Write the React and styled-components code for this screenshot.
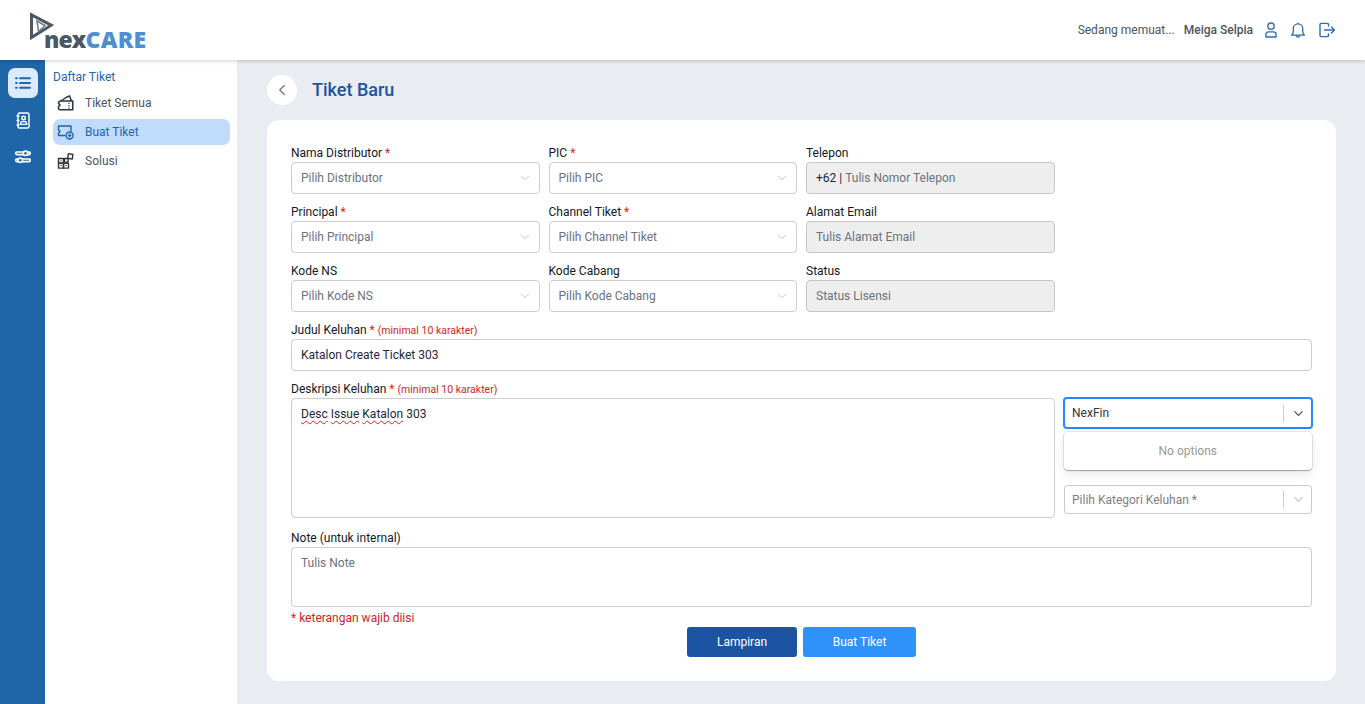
import React from "react";
import styled, { createGlobalStyle } from "styled-components";
import { ChevronDown, ChevronLeft } from "lucide-react";

const GlobalStyle = createGlobalStyle`
  html, body {
    margin: 0;
    padding: 0;
    height: 100%;
    overflow: hidden;
  }
  body {
    font-family: Roboto, "Liberation Sans", sans-serif;
    font-size: 12px;
    color: #1f2937;
    background: #e9ecf1;
  }
  * {
    box-sizing: border-box;
  }
`;

const LogoMark = () => (
  <svg width="25" height="29" viewBox="0 0 25 29" fill="none">
    <path d="M1.500 2.800 L21.200 13.200 L1.500 25.500 Z" stroke="#4b5763" strokeWidth="3" />
    <path d="M7 9 L15 13.500 L8.500 19.500 Z" stroke="#6f7a85" strokeWidth="1.500" />
  </svg>
);

const IconList = () => (
  <svg width="16" height="16" viewBox="0 0 16 16" fill="none" stroke="#1f66a9" strokeWidth="1.900" strokeLinecap="round">
    <path d="M5 3.200h10M5 8h10M5 12.800h10M1 3.200h.8M1 8h.8M1 12.800h.8" />
  </svg>
);

const IconContacts = () => (
  <svg width="16" height="17" viewBox="0 0 16 17" fill="none" stroke="#fff" strokeWidth="1.400" strokeLinejoin="round">
    <rect x="3" y="1" width="11" height="15" rx="1.500" />
    <path d="M1.500 4h3M1.500 8.500h3M1.500 13h3" />
    <circle cx="8.600" cy="6" r="1.800" />
    <path d="M5.600 12.400v-1.200c0-1 .7-1.600 1.600-1.600h2.800c.9 0 1.600.6 1.600 1.600v1.200z" />
  </svg>
);

const IconSliders = () => (
  <svg width="16" height="14" viewBox="0 0 16 14" fill="none" stroke="#fff" strokeWidth="1.600">
    <rect x="0.700" y="2" width="14.600" height="2.600" rx="1.300" />
    <rect x="0.700" y="9" width="14.600" height="2.600" rx="1.300" />
    <circle cx="10.500" cy="3.300" r="2.200" fill="#1f66a9" />
    <circle cx="5.300" cy="10.300" r="2.200" fill="#1f66a9" />
  </svg>
);

const IconTicketAll = () => (
  <svg width="17" height="16" viewBox="0 0 17 16" fill="none" stroke="#2b3440" strokeWidth="1.500" strokeLinejoin="round">
    <path d="M4 6 L9 2.500 L12.500 .8 L14.500 6" />
    <path d="M3.500 6 H15.800 V14.800 H3 C2 14.800 1.500 14.300 1.500 13.300 V11.200 C2.600 11.200 3 10.500 3 10 S2.600 8.800 1.500 8.800 C1.500 7 2.300 6 3.500 6 Z" />
    <path d="M12 7.800v1M12 10.200v1M12 12.600v1" />
  </svg>
);

const IconTicketNew = ({ color }) => (
  <svg width="17" height="16" viewBox="0 0 17 16" fill="none" stroke={color} strokeWidth="1.400" strokeLinejoin="round">
    <path d="M8.500 11.500H1.500V9c.9 0 1.400-.7 1.400-1.400S2.400 6.200 1.500 6.200V2h12.500v5.500" />
    <circle cx="12.600" cy="11.500" r="3.500" />
    <path d="M12.600 9.800v3.400M10.900 11.500h3.400" />
  </svg>
);

const IconBlocks = () => (
  <svg width="17" height="16" viewBox="0 0 17 16" fill="none" stroke="#2b3440" strokeWidth="1.400" strokeLinejoin="round">
    <rect x="1.500" y="5.500" width="5" height="4.800" />
    <rect x="1.500" y="10.300" width="5" height="4.800" />
    <rect x="6.500" y="10.300" width="5" height="4.800" />
    <rect x="7.500" y="5.500" width="3.600" height="3.600" />
    <rect x="11" y="1" width="4.600" height="4.600" transform="rotate(8 13 3.500)" />
    <path d="M4 7.500v1M4 12v1M9 12v1" />
  </svg>
);

const IconUser = () => (
  <svg width="12" height="16" viewBox="0 0 12 16" fill="none" stroke="#2f6db0" strokeWidth="1.300">
    <circle cx="6" cy="4.200" r="3.200" />
    <path d="M.9 15v-2.400c0-1.600 1.200-2.800 2.800-2.800h4.600c1.600 0 2.800 1.200 2.800 2.800V15z" strokeLinejoin="round" />
  </svg>
);

const IconBell = () => (
  <svg width="16" height="17" viewBox="0 0 16 17" fill="none" stroke="#2f6db0" strokeWidth="1.300" strokeLinejoin="round">
    <path d="M1.500 13.200c1.300-1 1.800-2.200 1.800-4V6.500a4.700 4.700 0 0 1 9.400 0v2.700c0 1.800.5 3 1.800 4z" />
    <path d="M6.300 13.400c0 2.400 3.400 2.400 3.400 0M8 1.800V.7" />
  </svg>
);

const IconLogout = () => (
  <svg width="16" height="16" viewBox="0 0 16 16" fill="none" stroke="#2f6db0" strokeWidth="1.400" strokeLinecap="round" strokeLinejoin="round">
    <path d="M9.500 4V2.400c0-.6-.4-1-1-1H2c-.6 0-1 .4-1 1v11.200c0 .6.4 1 1 1h6.500c.6 0 1-.4 1-1V12" />
    <path d="M5.500 8h10M12.500 5l3 3-3 3" />
  </svg>
);

const Select = ({ placeholder }) => (
  <SelectBox>
    <SelectValue>{placeholder}</SelectValue>
    <ChevronDown size={14} color="#b8bcc2" strokeWidth={1.5} />
  </SelectBox>
);

const Required = () => <Star> *</Star>;

export default function App() {
  return (
    <Page>
      <GlobalStyle />
      <Header>
        <Logo>
          <LogoMark />
          <LogoText>
            nex<LogoAccent>CARE</LogoAccent>
          </LogoText>
        </Logo>
        <HeaderRight>
          <LoadingText>Sedang memuat...</LoadingText>
          <UserName>Meiga Selpia</UserName>
          <HeaderIcons>
            <IconUser />
            <IconBell />
            <IconLogout />
          </HeaderIcons>
        </HeaderRight>
      </Header>
      <Body>
        <Rail>
          <RailButton $active>
            <IconList />
          </RailButton>
          <RailButton>
            <IconContacts />
          </RailButton>
          <RailButton>
            <IconSliders />
          </RailButton>
        </Rail>
        <Sidebar>
          <SidebarTitle>Daftar Tiket</SidebarTitle>
          <SideItem>
            <IconTicketAll />
            Tiket Semua
          </SideItem>
          <SideItem $active>
            <IconTicketNew color="#1f66a9" />
            Buat Tiket
          </SideItem>
          <SideItem>
            <IconBlocks />
            Solusi
          </SideItem>
        </Sidebar>
        <Main>
          <TitleRow>
            <BackButton>
              <ChevronLeft size={18} color="#6b7280" strokeWidth={1.6} />
            </BackButton>
            <PageTitle>Tiket Baru</PageTitle>
          </TitleRow>
          <Card>
            <FormGrid>
              <Field>
                <Label>Nama Distributor<Required /></Label>
                <Select placeholder="Pilih Distributor" />
              </Field>
              <Field>
                <Label>PIC<Required /></Label>
                <Select placeholder="Pilih PIC" />
              </Field>
              <Field>
                <Label>Telepon</Label>
                <ReadOnlyBox>
                  <Prefix>+62 |&nbsp;</Prefix>Tulis Nomor Telepon
                </ReadOnlyBox>
              </Field>
              <EmptyCell />

              <Field>
                <Label>Principal<Required /></Label>
                <Select placeholder="Pilih Principal" />
              </Field>
              <Field>
                <Label>Channel Tiket<Required /></Label>
                <Select placeholder="Pilih Channel Tiket" />
              </Field>
              <Field>
                <Label>Alamat Email</Label>
                <ReadOnlyBox>Tulis Alamat Email</ReadOnlyBox>
              </Field>
              <EmptyCell />

              <Field>
                <Label>Kode NS</Label>
                <Select placeholder="Pilih Kode NS" />
              </Field>
              <Field>
                <Label>Kode Cabang</Label>
                <Select placeholder="Pilih Kode Cabang" />
              </Field>
              <Field>
                <Label>Status</Label>
                <ReadOnlyBox>Status Lisensi</ReadOnlyBox>
              </Field>
              <EmptyCell />

              <Field $span={4}>
                <Label>
                  Judul Keluhan<Required /> <Hint>(minimal 10 karakter)</Hint>
                </Label>
                <TextBox>Katalon Create Ticket 303</TextBox>
              </Field>

              <Field $span={3}>
                <Label>
                  Deskripsi Keluhan<Required /> <Hint>(minimal 10 karakter)</Hint>
                </Label>
                <AreaBox $height={120}>
                  <Misspelled>Desc</Misspelled> <Misspelled>Issue</Misspelled>{" "}
                  <Misspelled>Katalon</Misspelled> 303
                </AreaBox>
              </Field>
              <SideSelects>
                <ComboWrap>
                  <Combo $focused>
                    <ComboValue>NexFin</ComboValue>
                    <ComboDivider />
                    <ChevronDown size={15} color="#4b5563" strokeWidth={2} />
                  </Combo>
                  <ComboMenu>No options</ComboMenu>
                </ComboWrap>
                <Combo>
                  <ComboPlaceholder>Pilih Kategori Keluhan *</ComboPlaceholder>
                  <ComboDivider />
                  <ChevronDown size={15} color="#c4c7cc" strokeWidth={2} />
                </Combo>
              </SideSelects>

              <NoteField $span={4}>
                <Label>Note (untuk internal)</Label>
                <AreaBox $height={60} $muted>Tulis Note</AreaBox>
              </NoteField>
            </FormGrid>
            <RequiredNote>* keterangan wajib diisi</RequiredNote>
            <Actions>
              <ActionButton $bg="#1c54a3" $width={110}>Lampiran</ActionButton>
              <ActionButton $bg="#2f92fb" $width={113}>Buat Tiket</ActionButton>
            </Actions>
          </Card>
        </Main>
      </Body>
    </Page>
  );
}

const Page = styled.div`
  display: flex;
  flex-direction: column;
  height: 704px;
  width: 1365px;
  overflow: hidden;
`;
const Header = styled.header`
  position: relative;
  z-index: 2;
  height: 60px;
  flex-shrink: 0;
  background: #fff;
  display: flex;
  align-items: center;
  justify-content: space-between;
  padding: 0 30px 0 30px;
  box-shadow: 0 1px 4px rgba(0, 0, 0, 0.2);
`;
const Logo = styled.div`
  display: flex;
  align-items: flex-start;
  height: 60px;
  padding-top: 12px;
`;
const LogoText = styled.div`
  font-family: "Open Sans", sans-serif;
  font-weight: 800;
  font-size: 23px;
  line-height: 24px;
  letter-spacing: -0.9px;
  color: #4b5763;
  margin: 15px 0 0 -11px;
`;
const LogoAccent = styled.span`
  color: #4f8fd0;
  letter-spacing: 0.3px;
`;
const HeaderRight = styled.div`
  display: flex;
  align-items: center;
`;
const LoadingText = styled.span`
  color: #4b5563;
  margin-right: 9px;
`;
const UserName = styled.span`
  color: #4b5563;
  font-weight: 500;
  margin-right: 12px;
`;
const HeaderIcons = styled.div`
  display: flex;
  align-items: center;
  gap: 13px;
`;
const Body = styled.div`
  flex: 1;
  display: flex;
  min-height: 0;
`;
const Rail = styled.nav`
  width: 45px;
  flex-shrink: 0;
  background: #1f66a9;
  display: flex;
  flex-direction: column;
  align-items: center;
  padding-top: 8px;
  gap: 7px;
`;
const RailButton = styled.div`
  width: 30px;
  height: 30px;
  border-radius: 7px;
  display: flex;
  align-items: center;
  justify-content: center;
  background: ${(p) => (p.$active ? "#dbeafe" : "transparent")};
`;
const Sidebar = styled.aside`
  width: 192px;
  flex-shrink: 0;
  background: #fff;
  padding: 10px 7px 0 8px;
  display: flex;
  flex-direction: column;
  gap: 3px;
`;
const SidebarTitle = styled.div`
  color: #1f66a9;
  line-height: 15px;
  height: 17px;
`;
const SideItem = styled.div`
  height: 26px;
  display: flex;
  align-items: center;
  gap: 11px;
  padding-left: 4px;
  border-radius: 7px;
  color: ${(p) => (p.$active ? "#1f66a9" : "#4b5563")};
  background: ${(p) => (p.$active ? "#c0dbfc" : "transparent")};
`;
const Main = styled.main`
  flex: 1;
  min-width: 0;
  padding: 15px 29px 0 30px;
`;
const TitleRow = styled.div`
  display: flex;
  align-items: center;
  gap: 15px;
  height: 30px;
  margin-bottom: 15px;
`;
const BackButton = styled.div`
  width: 30px;
  height: 30px;
  border-radius: 50%;
  background: #fff;
  display: flex;
  align-items: center;
  justify-content: center;
`;
const PageTitle = styled.h1`
  margin: 0 0 2px;
  font-size: 18px;
  font-weight: 500;
  color: #1c54a3;
`;
const Card = styled.section`
  height: 561px;
  background: #fff;
  border-radius: 12px;
  padding: 24px 24px 0 24px;
`;
const FormGrid = styled.div`
  display: grid;
  grid-template-columns: repeat(4, 1fr);
  column-gap: 9px;
  row-gap: 9px;
`;
const Field = styled.div`
  grid-column: span ${(p) => p.$span || 1};
  min-width: 0;
`;
const NoteField = styled(Field)`
  margin-top: 2px;
`;
const EmptyCell = styled.div``;
const Label = styled.div`
  height: 18px;
  line-height: 19px;
  color: #111827;
  white-space: nowrap;
`;
const Star = styled.span`
  color: #dc2626;
`;
const Hint = styled.span`
  color: #cc1f1f;
  font-size: 10.5px;
`;
const SelectBox = styled.div`
  height: 32px;
  border: 1px solid #cbcdd1;
  border-radius: 4px;
  background: #fff;
  display: flex;
  align-items: center;
  justify-content: space-between;
  padding: 0 7px 0 9px;
`;
const SelectValue = styled.span`
  color: #6b7280;
`;
const ReadOnlyBox = styled.div`
  height: 32px;
  border: 1px solid #c4c6ca;
  border-radius: 4px;
  background: #eeeeee;
  display: flex;
  align-items: center;
  padding: 0 9px;
  color: #6b7280;
`;
const Prefix = styled.span`
  color: #1f2937;
`;
const TextBox = styled.div`
  height: 32px;
  border: 1px solid #cbcdd1;
  border-radius: 4px;
  display: flex;
  align-items: center;
  padding: 0 9px;
  color: #1f2937;
`;
const AreaBox = styled.div`
  height: ${(p) => p.$height}px;
  border: 1px solid #cbcdd1;
  border-radius: 4px;
  padding: 8px 9px;
  line-height: 14px;
  color: ${(p) => (p.$muted ? "#6b7280" : "#1f2937")};
`;
const Misspelled = styled.span`
  text-decoration: underline wavy #d92020 1px;
  text-underline-offset: 2px;
`;
const SideSelects = styled.div`
  padding-top: 18px;
  display: flex;
  flex-direction: column;
  gap: 57px;
`;
const ComboWrap = styled.div`
  position: relative;
`;
const Combo = styled.div`
  height: ${(p) => (p.$focused ? 30 : 29)}px;
  border-radius: 3px;
  border: ${(p) => (p.$focused ? "1px solid #2684ff" : "1px solid #cccccc")};
  box-shadow: ${(p) => (p.$focused ? "0 0 0 1px #2684ff" : "none")};
  display: flex;
  align-items: center;
  padding: 0 5px 0 7.5px;
  background: #fff;
`;
const ComboValue = styled.span`
  flex: 1;
  color: #333;
`;
const ComboPlaceholder = styled.span`
  flex: 1;
  color: #808080;
`;
const ComboDivider = styled.span`
  width: 1px;
  height: 17px;
  background: #cccccc;
  margin-right: 7px;
`;
const ComboMenu = styled.div`
  position: absolute;
  top: 34px;
  left: 0;
  right: 0;
  height: 38px;
  background: #fff;
  border-radius: 4px;
  box-shadow: 0 0 0 1px rgba(0, 0, 0, 0.08), 0 1px 1px rgba(0, 0, 0, 0.25), 0 4px 11px rgba(0, 0, 0, 0.1);
  display: flex;
  align-items: center;
  justify-content: center;
  color: #999999;
`;
const RequiredNote = styled.div`
  margin-top: 4px;
  height: 16px;
  line-height: 15px;
  color: #cc1f1f;
`;
const Actions = styled.div`
  display: flex;
  justify-content: center;
  gap: 6px;
`;
const ActionButton = styled.button`
  width: ${(p) => p.$width}px;
  height: 30px;
  border: none;
  border-radius: 3px;
  background: ${(p) => p.$bg};
  color: #fff;
  font-family: Roboto, sans-serif;
  font-size: 12px;
`;
